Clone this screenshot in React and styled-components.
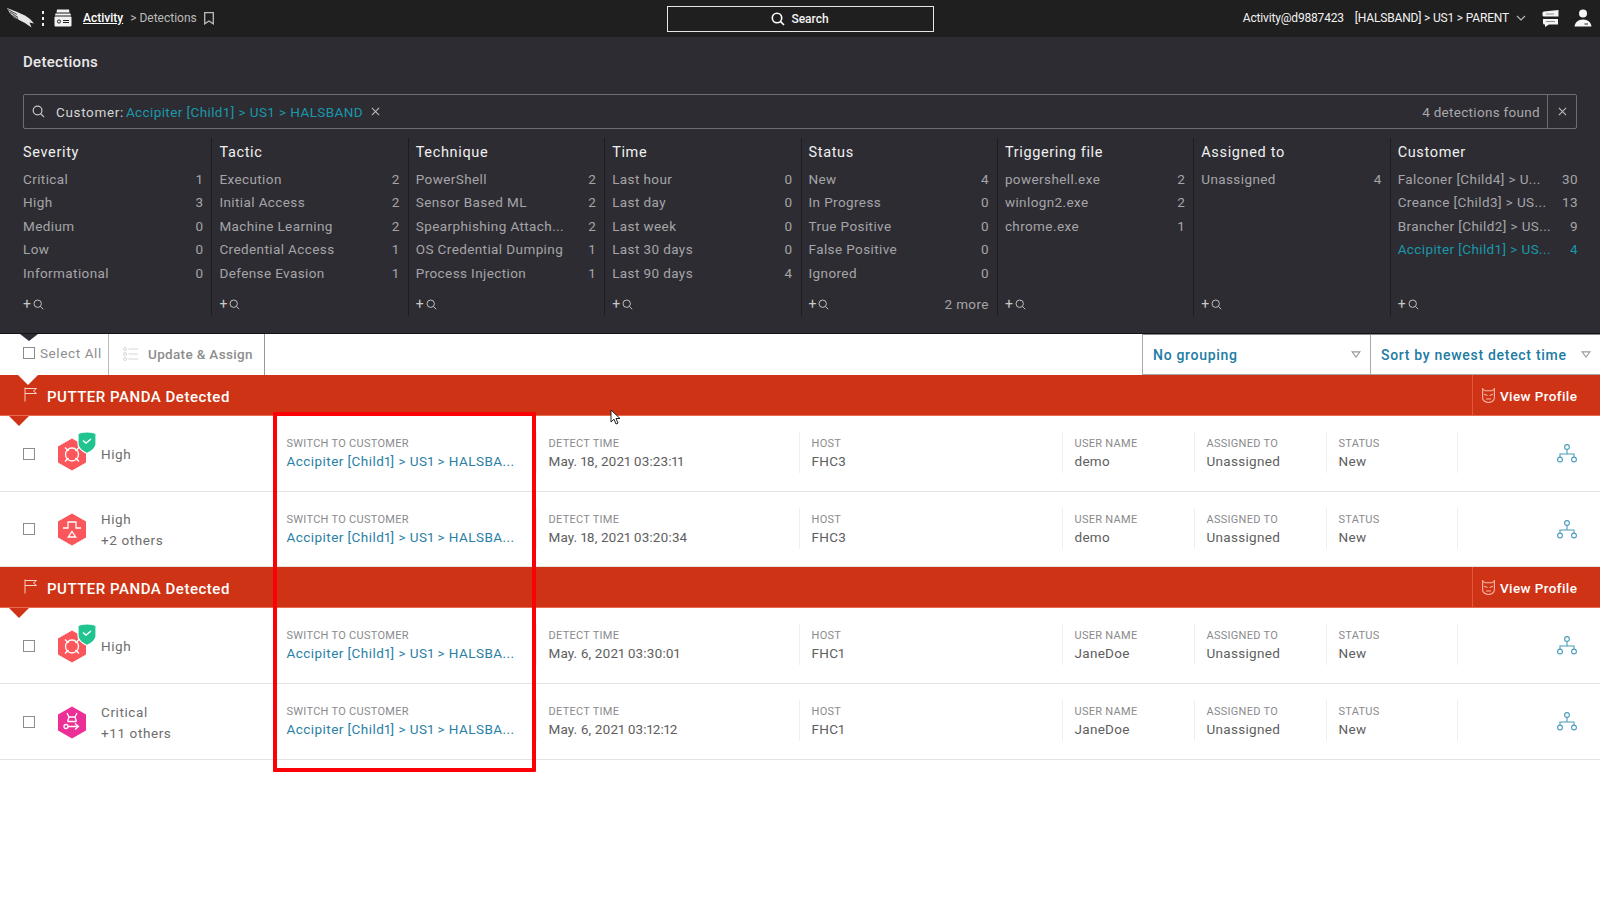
import React from 'react';
import styled, { createGlobalStyle } from 'styled-components';

const GlobalStyle = createGlobalStyle`
  html, body { margin: 0; padding: 0; background: #fff; }
  body { font-family: Roboto, "Liberation Sans", sans-serif; width: 1600px; height: 900px; overflow: hidden; }
  * { box-sizing: border-box; }
`;

const facets = [
  { title: 'Severity', items: [['Critical', 1], ['High', 3], ['Medium', 0], ['Low', 0], ['Informational', 0]] },
  { title: 'Tactic', items: [['Execution', 2], ['Initial Access', 2], ['Machine Learning', 2], ['Credential Access', 1], ['Defense Evasion', 1]] },
  { title: 'Technique', items: [['PowerShell', 2], ['Sensor Based ML', 2], ['Spearphishing Attach...', 2], ['OS Credential Dumping', 1], ['Process Injection', 1]] },
  { title: 'Time', items: [['Last hour', 0], ['Last day', 0], ['Last week', 0], ['Last 30 days', 0], ['Last 90 days', 4]] },
  { title: 'Status', more: '2 more', items: [['New', 4], ['In Progress', 0], ['True Positive', 0], ['False Positive', 0], ['Ignored', 0]] },
  { title: 'Triggering file', items: [['powershell.exe', 2], ['winlogn2.exe', 2], ['chrome.exe', 1]] },
  { title: 'Assigned to', items: [['Unassigned', 4]] },
  { title: 'Customer', items: [['Falconer [Child4] > U...', 30], ['Creance [Child3] > US...', 13], ['Brancher [Child2] > US...', 9], ['Accipiter [Child1] > US...', 4, true]] }
];

const groups = [
  {
    rows: [
      { kind: 'target', shield: true, sev: 'High', time: 'May. 18, 2021 03:23:11', host: 'FHC3', user: 'demo' },
      { kind: 'funnel', sev: 'High', extra: '+2 others', time: 'May. 18, 2021 03:20:34', host: 'FHC3', user: 'demo' }
    ]
  },
  {
    rows: [
      { kind: 'target', shield: true, sev: 'High', time: 'May. 6, 2021 03:30:01', host: 'FHC1', user: 'JaneDoe' },
      { kind: 'key', critical: true, sev: 'Critical', extra: '+11 others', time: 'May. 6, 2021 03:12:12', host: 'FHC1', user: 'JaneDoe' }
    ]
  }
];

const SearchIcon = ({ size = 14, color = '#ccc', width = 1.6 }) => (
  <svg width={size} height={size} viewBox="0 0 14 14" fill="none" stroke={color} strokeWidth={width}>
    <circle cx="6" cy="6" r="4.7" />
    <path d="M9.4 9.4L13 13" />
  </svg>
);

const CloseIcon = ({ color = '#bbb' }) => (
  <svg width="9" height="9" viewBox="0 0 10 10" stroke={color} strokeWidth="1.2">
    <path d="M1 1l8 8M9 1L1 9" />
  </svg>
);

const Caret = () => (
  <svg width="10" height="7" viewBox="0 0 11 8" fill="none" stroke="#9a9a9a" strokeWidth="1.2">
    <path d="M1 1h9L5.500 7z" />
  </svg>
);

const Logo = () => (
  <svg width="27" height="21" viewBox="0 0 27 21">
    <path d="M0 0l9 3.500 9 4 5 3.500 4 4.500-4.500-1 2 5-6.500-4.500L7 9.500 2.500 4.500z" fill="#e6e6e6" />
    <path d="M1 1.500l9 5M3 4l8 5.500M5.500 7.500l6 4" stroke="#1f1f1f" strokeWidth=".8" />
  </svg>
);

const CardIcon = () => (
  <svg width="18" height="18" viewBox="0 0 18 18">
    <path d="M3 0.500h12l.5 3H2.500zM1.500 4.500h15l.5 2H1z" fill="#f2f2f2" />
    <rect x="0.500" y="7.500" width="17" height="10" rx="1" fill="#f2f2f2" />
    <circle cx="5" cy="12.500" r="1.600" fill="none" stroke="#222" strokeWidth="1" />
    <path d="M9 11.500h6M9 13.500h6" stroke="#222" strokeWidth="1" />
  </svg>
);

const BookmarkIcon = () => (
  <svg width="10" height="13" viewBox="0 0 10 13" fill="none" stroke="#bdbdbd" strokeWidth="1.300">
    <path d="M.7.7h8.600v11L5 9 .7 11.700z" />
  </svg>
);

const StackIcon = () => (
  <svg width="17" height="17" viewBox="0 0 17 17" fill="#f4f4f4">
    <path d="M2 1.500L16.500 0v6.500H2a1.500 1.500 0 0 1-1.500-1.500V3A1.500 1.500 0 0 1 2 1.500z" />
    <path d="M1 9h15v5.500H7L3 17v-2.500H2.500A1.500 1.500 0 0 1 1 13z" />
    <path d="M4 4h8M4 11.500h9" stroke="#8d8d8d" strokeWidth="1.200" />
  </svg>
);

const UserIcon = () => (
  <svg width="18" height="18" viewBox="0 0 18 18" fill="#f6f6f6">
    <circle cx="9" cy="4.600" r="4" />
    <path d="M0.500 17.500c.5-4 3.500-7 8.500-7s8 3 8.500 7z" />
    <path d="M10.500 15h3.500" stroke="#222" strokeWidth="1" />
  </svg>
);

const FlagIcon = () => (
  <svg width="14" height="15" viewBox="0 0 14 15" fill="none" stroke="#f3b1a2" strokeWidth="1">
    <path d="M1 .5v14" strokeWidth="1.200" />
    <path d="M1 1.500h11.500l-3 2.500 3 2.500H1" stroke="#f7d3ca" />
  </svg>
);

const ListIcon = () => (
  <svg width="15" height="14" viewBox="0 0 15 14" fill="none" stroke="#d6d6d6" strokeWidth="1">
    <circle cx="2" cy="2" r="1.500" />
    <circle cx="2" cy="7" r="1.500" />
    <circle cx="2" cy="12" r="1.500" />
    <path d="M5.500 2H15M5.500 7H15M5.500 12H15" />
  </svg>
);

const MaskIcon = () => (
  <svg width="13" height="15" viewBox="0 0 13 15" fill="none" stroke="#f5b8aa" strokeWidth="1.100">
    <path d="M.6.8l2.400 2h7L12.400.8v9c0 3-3 4.700-5.900 4.700S.6 12.800.6 9.800z" />
    <path d="M2 6.200l3.500 1.200M11 6.200L7.500 7.400M4 11h5" />
  </svg>
);

const GraphIcon = () => (
  <svg width="20" height="19" viewBox="0 0 20 19" fill="none" stroke="#4b9cba" strokeWidth="1.100">
    <circle cx="10" cy="3" r="2.400" />
    <circle cx="3" cy="15.500" r="2.400" />
    <circle cx="17" cy="15.500" r="2.400" />
    <path d="M10 5.400v4.600M3 13.100V10h14v3.100" />
  </svg>
);

const glyphs = {
  target: (
    <g fill="none" stroke="#fff" strokeWidth="1.300">
      <circle cx="14" cy="16.500" r="6.500" />
      <path d="M7 9.500l3.500 3.500M21 9.500L17.500 13M7 23.500l3.500-3.500M21 23.500L17.500 20" />
    </g>
  ),
  funnel: (
    <g fill="none" stroke="#fff" strokeWidth="1.300">
      <path d="M5 15h5V9h8v6h5" />
      <path d="M14 18.500l3.700 5.500h-7.400z" />
    </g>
  ),
  key: (
    <g fill="none" stroke="#fff" strokeWidth="1.300">
      <path d="M9 7l2 4h6l2-4M9.500 15.500L11 11M18.500 15.500L17 11M9.500 15.500h9" />
      <circle cx="8" cy="20.500" r="2" />
      <path d="M10 20.500h9M17 17.500l3.500 3-3.500 3" />
    </g>
  )
};

const SeverityIcon = ({ kind, critical }) => (
  <svg width="28" height="33" viewBox="0 0 28 33">
    <path d="M14 .5L28 8.500v16L14 32.500 0 24.500v-16z" fill={critical ? '#ec2f96' : '#fa575c'} />
    {glyphs[kind]}
  </svg>
);

const ShieldBadge = () => (
  <svg width="22" height="25" viewBox="0 0 22 25">
    <path d="M2 3.500Q11 .5 20 3.500V14q0 5-9 9.500Q2 19 2 14z" fill="#1fc48f" stroke="#fff" strokeWidth="1.200" />
    <path d="M7 10.500l3 2.500 5-4" fill="none" stroke="#fff" strokeWidth="1.500" />
  </svg>
);

const Cursor = () => (
  <svg width="12" height="16" viewBox="0 0 12 16">
    <path d="M1 1v12l3-2.800 2 4.800 2-.9-2-4.600h4z" fill="#fff" stroke="#222" strokeWidth="1" />
  </svg>
);

const Cell = ({ label, value, link, tight, width }) => (
  <CellBox $width={width}>
    <CellLabel>{label}</CellLabel>
    <CellValue $link={link} $tight={tight}>{value}</CellValue>
  </CellBox>
);

const App = () => (
  <Page>
    <GlobalStyle />
    <TopBar>
      <TopLeft>
        <Logo />
        <Kebab><i /><i /><i /></Kebab>
        <CardIcon />
        <Crumb href="#">Activity</Crumb>
        <CrumbPlain>&gt; Detections</CrumbPlain>
        <BookmarkIcon />
      </TopLeft>
      <SearchButton><SearchIcon size={14} color="#fff" /> Search</SearchButton>
      <TopRight>
        <span>Activity@d9887423</span>
        <span>[HALSBAND] &gt; US1 &gt; PARENT</span>
        <Chevron viewBox="0 0 10 6" width="10" height="6"><path d="M1 1l4 4 4-4" /></Chevron>
        <StackIcon />
        <UserIcon />
      </TopRight>
    </TopBar>

    <Panel>
      <PanelTitle>Detections</PanelTitle>
      <SearchBox>
        <SearchMain>
          <SearchIcon size={13} color="#c8c8c8" width={1.3} />
          <FilterKey>Customer:</FilterKey>
          <FilterValue>Accipiter [Child1] &gt; US1 &gt; HALSBAND</FilterValue>
          <CloseIcon />
        </SearchMain>
        <Found>4 detections found</Found>
        <ClearBox><CloseIcon /></ClearBox>
      </SearchBox>
      <Facets>
        {facets.map((f, i) => (
          <Facet key={f.title} $first={i === 0}>
            <FacetTitle>{f.title}</FacetTitle>
            <FacetRows>
              {f.items.map(([name, count, active]) => (
                <FacetRow key={name} $active={active}>
                  <span>{name}</span>
                  <span>{count}</span>
                </FacetRow>
              ))}
            </FacetRows>
            <FacetFoot>
              <AddSearch>+<SearchIcon size={11} color="#c8c8c8" width={1.2} /></AddSearch>
              {f.more && <More>{f.more}</More>}
            </FacetFoot>
          </Facet>
        ))}
      </Facets>
    </Panel>

    <Toolbar>
      <SelectAll>
        <Check />
        <span>Select All</span>
      </SelectAll>
      <UpdateAssign>
        <ListIcon />
        <span>Update &amp; Assign</span>
      </UpdateAssign>
      <Spacer />
      <Dropdown $width={228}>No grouping<Caret /></Dropdown>
      <Dropdown $width={230}>Sort by newest detect time<Caret /></Dropdown>
    </Toolbar>

    {groups.map((g, gi) => (
      <section key={gi}>
        <Banner $notch={gi === 0}>
          <BannerTitle>
            <FlagIcon />
            PUTTER PANDA Detected
          </BannerTitle>
          <ViewProfile><MaskIcon /> View Profile</ViewProfile>
        </Banner>
        {g.rows.map(r => (
          <Row key={r.time}>
            <SeverityCell>
              <Check />
              <IconWrap>
                <SeverityIcon kind={r.kind} critical={r.critical} />
                {r.shield && <Badge><ShieldBadge /></Badge>}
              </IconWrap>
              <SeverityText>
                <div>{r.sev}</div>
                {r.extra && <div>{r.extra}</div>}
              </SeverityText>
            </SeverityCell>
            <Cell width={262} label="SWITCH TO CUSTOMER" value="Accipiter [Child1] > US1 > HALSBA..." link />
            <Cell width={263} label="DETECT TIME" value={r.time} tight />
            <Cell width={263} label="HOST" value={r.host} />
            <Cell width={132} label="USER NAME" value={r.user} />
            <Cell width={132} label="ASSIGNED TO" value="Unassigned" />
            <Cell width={131} label="STATUS" value="New" />
            <GraphCell><GraphIcon /></GraphCell>
          </Row>
        ))}
      </section>
    ))}

    <Highlight />
    <CursorSpot><Cursor /></CursorSpot>
  </Page>
);

export default App;

const Page = styled.div`
  position: relative;
  width: 1600px;
  height: 900px;
  background: #fff;
  overflow: hidden;
`;

const TopBar = styled.header`
  display: grid;
  grid-template-columns: 1fr 267px 1fr;
  align-items: center;
  height: 37px;
  padding-bottom: 1px;
  background: #1f1f1f;
  font-size: 12px;
  color: #f2f2f2;
`;

const TopLeft = styled.div`
  display: flex;
  align-items: center;
  padding-left: 7px;
  svg:nth-of-type(2) { margin-right: 11px; }
`;

const Kebab = styled.div`
  display: flex;
  flex-direction: column;
  gap: 3px;
  margin: 0 10px 0 8px;
  i { display: block; width: 2px; height: 3px; background: #eee; }
`;

const Crumb = styled.a`
  color: #fff;
  text-decoration: underline;
  font-weight: 500;
`;

const CrumbPlain = styled.span`
  color: #bcbcbc;
  margin: 0 7px 0 7px;
  white-space: pre;
`;

const SearchButton = styled.button`
  display: flex;
  align-items: center;
  justify-content: center;
  gap: 6px;
  height: 26px;
  margin-top: 1px;
  background: #1f1f1f;
  border: 1px solid #e6e6e6;
  color: #f2f2f2;
  font-family: Roboto, sans-serif;
  font-size: 12px;
  font-weight: 500;
`;

const TopRight = styled.div`
  display: flex;
  align-items: center;
  justify-content: flex-end;
  padding-right: 8px;
  letter-spacing: -0.180px;
  span:first-child { margin-right: 11px; }
  svg:last-of-type { margin-left: 15px; }
`;

const Chevron = styled.svg`
  fill: none;
  stroke: #bbb;
  stroke-width: 1.100;
  margin: 0 16px 0 7px;
`;

const Panel = styled.div`
  height: 297px;
  padding: 15px 22px 0 23px;
  background: #2d2c32;
  border-bottom: 1px solid #141416;
`;

const PanelTitle = styled.h1`
  margin: 0;
  font-size: 15px;
  font-weight: 500;
  line-height: 20px;
  letter-spacing: 0.300px;
  color: #eaeaea;
`;

const SearchBox = styled.div`
  display: flex;
  align-items: center;
  height: 35px;
  margin: 22px 1px 0 0;
  border: 1px solid #6e6e72;
  border-radius: 2px;
  font-size: 13.500px;
  letter-spacing: 0.400px;
`;

const SearchMain = styled.div`
  display: flex;
  align-items: center;
  flex: 1;
  padding-left: 8px;
  svg:last-child { margin-left: 8px; }
`;

const FilterKey = styled.span`
  margin: 0 2px 0 11px;
  letter-spacing: 0.650px;
  color: #d4d4d4;
`;

const FilterValue = styled.span`
  color: #1a98aa;
`;

const Found = styled.span`
  margin-right: 7px;
  letter-spacing: 0.300px;
  color: #a9a9ac;
`;

const ClearBox = styled.div`
  display: flex;
  align-items: center;
  justify-content: center;
  width: 29px;
  height: 100%;
  border-left: 1px solid #6e6e72;
`;

const Facets = styled.div`
  display: grid;
  grid-template-columns: repeat(8, 1fr);
  column-gap: 16px;
  margin-top: 9px;
`;

const Facet = styled.div`
  position: relative;
  display: flex;
  flex-direction: column;
  height: 178px;
  &::before {
    content: '';
    display: ${p => (p.$first ? 'none' : 'block')};
    position: absolute;
    left: -8px;
    top: 0;
    bottom: 0;
    width: 1px;
    background: #1d1d20;
  }
`;

const FacetTitle = styled.div`
  height: 31px;
  padding-top: 6px;
  font-size: 14.500px;
  letter-spacing: 0.650px;
  color: #f0f0f0;
`;

const FacetRows = styled.div`
  height: 117px;
`;

const FacetRow = styled.div`
  display: flex;
  justify-content: space-between;
  height: 23.400px;
  line-height: 21px;
  font-size: 13.500px;
  letter-spacing: 0.400px;
  white-space: nowrap;
  color: ${p => (p.$active ? '#1a98aa' : '#a5a5a8')};
`;

const FacetFoot = styled.div`
  display: flex;
  justify-content: space-between;
  align-items: center;
  margin-top: 10px;
`;

const AddSearch = styled.span`
  display: flex;
  align-items: center;
  gap: 2px;
  font-size: 14px;
  color: #c8c8c8;
`;

const More = styled.span`
  font-size: 13.500px;
  letter-spacing: 0.400px;
  color: #a5a5a8;
`;

const Toolbar = styled.div`
  position: relative;
  display: flex;
  height: 41px;
  font-size: 13.500px;
  letter-spacing: 0.600px;
  &::before {
    content: '';
    position: absolute;
    left: 20px;
    top: 0;
    border: 9px solid transparent;
    border-top: 7px solid #2d2c32;
    border-bottom: 0;
  }
`;

const Check = styled.span`
  flex: none;
  width: 12px;
  height: 12px;
  border: 1px solid #8c8c8c;
  background: #fff;
`;

const SelectAll = styled.label`
  display: flex;
  align-items: center;
  gap: 5px;
  width: 109px;
  padding: 0 0 3px 23px;
  border-right: 1px solid #bbb;
  color: #8d8d8d;
`;

const UpdateAssign = styled.div`
  display: flex;
  align-items: center;
  gap: 10px;
  width: 156px;
  padding: 0 0 1px 14px;
  border-right: 1px solid #999;
  font-weight: 500;
  letter-spacing: 0.330px;
  color: #8d8d8d;
`;

const Spacer = styled.div`
  flex: 1;
`;

const Dropdown = styled.div`
  display: flex;
  align-items: center;
  justify-content: space-between;
  width: ${p => p.$width}px;
  padding: 0 9px 0 10px;
  border: 1px solid #a8a8a8;
  border-right: 0;
  border-top-color: #888;
  font-size: 14px;
  font-weight: 500;
  letter-spacing: 0.700px;
  color: #1c7ca3;
`;

const Banner = styled.div`
  position: relative;
  display: flex;
  justify-content: space-between;
  height: 41px;
  background: #cf3315;
  border-bottom: 1px solid #ea6a50;
  color: #fff;
  &::before {
    content: '';
    display: ${p => (p.$notch ? 'block' : 'none')};
    position: absolute;
    left: 18px;
    top: 0;
    border: 10px solid transparent;
    border-top: 10px solid #fff;
    border-bottom: 0;
  }
  &::after {
    content: '';
    position: absolute;
    left: 9px;
    top: 41px;
    border: 10px solid transparent;
    border-top: 10px solid #cf3315;
    border-bottom: 0;
    z-index: 1;
  }
`;

const BannerTitle = styled.div`
  display: flex;
  align-items: center;
  gap: 9px;
  padding: 3px 0 0 24px;
  font-size: 15px;
  font-weight: 500;
  letter-spacing: 0.520px;
  svg { margin-top: -4px; }
`;

const ViewProfile = styled.div`
  display: flex;
  align-items: center;
  gap: 5px;
  width: 128px;
  padding: 1px 0 0 9px;
  border-left: 1px solid #e2573d;
  font-size: 13.500px;
  font-weight: 500;
  letter-spacing: 0.400px;
`;

const Row = styled.div`
  display: flex;
  height: 75.700px;
  padding-top: 16px;
  border-bottom: 1px solid #e4e4e4;
`;

const SeverityCell = styled.div`
  display: flex;
  align-items: center;
  width: 274px;
  height: 43px;
  padding-left: 23px;
`;

const IconWrap = styled.div`
  position: relative;
  display: flex;
  margin: 1px 15px 0 23px;
`;

const Badge = styled.span`
  position: absolute;
  right: -12px;
  top: -8px;
  display: flex;
`;

const SeverityText = styled.div`
  padding-top: 2px;
  font-size: 13.500px;
  line-height: 21px;
  letter-spacing: 0.600px;
  color: #6d6d6d;
`;

const CellBox = styled.div`
  width: ${p => p.$width}px;
  height: 41px;
  padding: 4px 0 0 11.500px;
  border-left: 1px solid #efefef;
`;

const CellLabel = styled.div`
  font-size: 11px;
  line-height: 15px;
  letter-spacing: 0.280px;
  color: #8a8a8e;
`;

const CellValue = styled.div`
  font-size: 13.500px;
  line-height: 20px;
  letter-spacing: ${p => (p.$link ? '0.450px' : p.$tight ? '0.120px' : '0.300px')};
  white-space: nowrap;
  font-variant-numeric: proportional-nums;
  color: ${p => (p.$link ? '#2a7fa6' : '#5e5e5e')};
`;

const GraphCell = styled.div`
  display: flex;
  justify-content: flex-end;
  flex: 1;
  height: 41px;
  padding: 12px 23px 0 0;
  border-left: 1px solid #efefef;
`;

const Highlight = styled.div`
  position: absolute;
  left: 273px;
  top: 412px;
  width: 263px;
  height: 360px;
  border: 4px solid #fb0007;
  border-radius: 1px;
  pointer-events: none;
`;

const CursorSpot = styled.div`
  position: absolute;
  left: 610px;
  top: 409px;
  display: flex;
`;
